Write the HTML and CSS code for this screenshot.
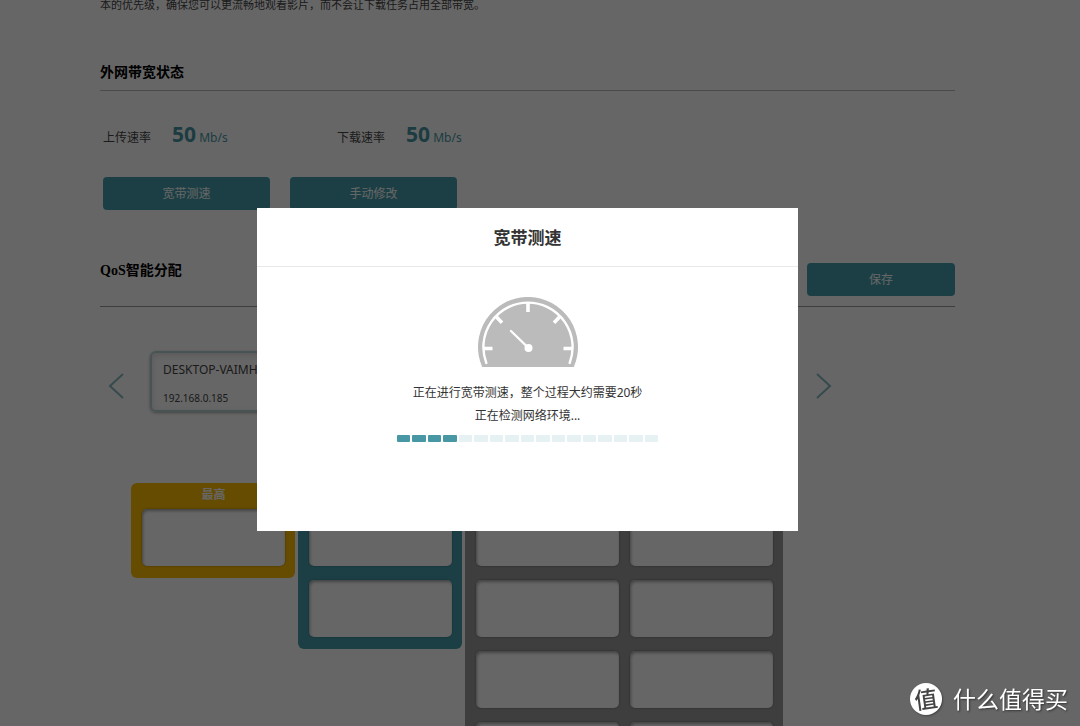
FILE: index.html
```html
<!DOCTYPE html>
<html lang="zh-CN">
<head>
<meta charset="utf-8">
<title>宽带测速</title>
<link rel="stylesheet" href="styles.css">
</head>
<body>
<main class="page">
  <p class="intro">本的优先级，确保您可以更流畅地观看影片，而不会让下载任务占用全部带宽。</p>

  <section class="section">
    <div class="section-head"><h2>外网带宽状态</h2></div>
    <dl class="rates">
      <div class="rate"><dt>上传速率</dt><dd><strong>50</strong> Mb/s</dd></div>
      <div class="rate"><dt>下载速率</dt><dd><strong>50</strong> Mb/s</dd></div>
    </dl>
    <div class="actions">
      <button class="btn" type="button">宽带测速</button>
      <button class="btn" type="button">手动修改</button>
    </div>
  </section>

  <section class="section qos">
    <div class="section-head">
      <h2>QoS智能分配</h2>
      <button class="btn btn-save" type="button">保存</button>
    </div>
    <div class="devices">
      <button class="arrow" type="button" aria-label="上一页"><svg viewBox="0 0 16 28" width="16" height="28"><path d="M15 2 2 14l13 12"/></svg></button>
      <div class="device">
        <span class="device-name">DESKTOP-VAIMH</span>
        <span class="device-ip">192.168.0.185</span>
      </div>
      <button class="arrow" type="button" aria-label="下一页"><svg viewBox="0 0 16 28" width="16" height="28"><path d="M1 2l13 12L1 26"/></svg></button>
    </div>
    <div class="levels">
      <div class="level level-top">
        <h3>最高</h3>
        <div class="slots"><div class="slot"></div></div>
      </div>
      <div class="level level-high">
        <h3></h3>
        <div class="slots"><div class="slot"></div><div class="slot"></div></div>
      </div>
      <div class="level level-normal">
        <h3></h3>
        <div class="slots">
          <div class="slot"></div><div class="slot"></div>
          <div class="slot"></div><div class="slot"></div>
          <div class="slot"></div><div class="slot"></div>
          <div class="slot"></div><div class="slot"></div>
        </div>
      </div>
    </div>
  </section>
</main>

<div class="overlay">
  <div class="dialog" role="dialog" aria-modal="true" aria-labelledby="dialog-title">
    <h1 class="dialog-title" id="dialog-title">宽带测速</h1>
    <div class="dialog-body">
      <svg class="gauge" viewBox="0 0 100 70" width="100" height="70" aria-hidden="true">
        <path fill="#bbb" d="M4.200 70A50 50 0 1 1 95.800 70Z"/>
        <g fill="none" stroke="#fff" stroke-linecap="round">
          <path stroke-width="2.4" d="M8.300 66A44.600 44.600 0 1 1 91.700 66"/>
          <path stroke-width="3.600" stroke-linecap="butt" d="M50 6v9M6 51.500h8.500M94 51.500h-8.500M18 19.500l6 6.200M82 19.500l-6 6.200"/>
          <path stroke-width="2.400" d="M33 34l17.500 17"/>
        </g>
        <circle cx="50.500" cy="51" r="4" fill="#fff"/>
      </svg>
      <p>正在进行宽带测速，整个过程大约需要20秒</p>
      <p>正在检测网络环境...</p>
      <div class="progress" role="progressbar" aria-label="测速进度" aria-valuemin="0" aria-valuemax="17" aria-valuenow="4">
        <i class="on"></i><i class="on"></i><i class="on"></i><i class="on"></i><i></i><i></i><i></i><i></i><i></i><i></i><i></i><i></i><i></i><i></i><i></i><i></i><i></i>
      </div>
    </div>
  </div>
</div>

<div class="watermark"><span class="watermark-logo"><span>值</span></span><span>什么值得买</span></div>
</body>
</html>
```
FILE: styles.css
```css
* { box-sizing: border-box; }

body {
  margin: 0;
  height: 100vh;
  overflow: hidden;
  padding-right: 25px;
  background: #fff;
  color: #444;
  font: 12px/20px "Noto Sans", "Noto Sans CJK SC", sans-serif;
}

h1, h2, h3, p, dl, dd { margin: 0; }
button { font: inherit; border: 0; padding: 0; }

.page { max-width: 855px; margin: 0 auto; }
.intro { font-size: 11px; line-height: 10px; }

.section { margin-top: 53px; }
.section-head {
  display: flex;
  justify-content: space-between;
  padding-bottom: 7px;
  border-bottom: 1px solid #bbb;
}
.section-head h2 {
  color: #000;
  font: bold 14px/20px "Liberation Serif", "Noto Sans CJK SC", serif;
}

.rates { display: flex; padding: 30px 3px 0; }
.rate { display: flex; align-items: baseline; width: 234px; line-height: 26px; }
.rate dt { width: 69px; }
.rate dd { color: #4797a5; }
.rate strong { font-size: 21px; }

.actions { display: flex; gap: 20px; padding: 26px 3px 0; }
.btn {
  width: 167px;
  height: 33px;
  border-radius: 4px;
  background: #459fad;
  color: #fff;
}
.btn-save { width: 148px; }

.qos { margin-top: 53px; }
.qos .section-head { padding-bottom: 10px; border-color: #999; }
.qos h2 { line-height: 16px; }

.devices { display: flex; align-items: center; padding: 44px 123px 0 8px; }
.arrow { display: flex; margin-top: 9px; background: none; }
.arrow svg { fill: none; stroke: #86b8c0; stroke-width: 2; }
.device {
  display: flex;
  flex-direction: column;
  width: 165px;
  margin: 0 auto 0 26px;
  padding: 6px 11px 3px;
  border: 2px solid #b4cfd3;
  border-radius: 6px;
  box-shadow: 0 1px 3px #aaa, inset 0 2px 6px #ddd;
}
.device-name { line-height: 22px; }
.device-ip { padding-top: 8px; font-size: 10px; line-height: 18px; }

.levels { display: flex; align-items: flex-start; gap: 3px; padding: 71px 0 0 31px; }
.level { padding: 0 10px 12px 11px; border-radius: 6px; }
.level h3 { height: 26px; color: #fff; font-size: 12px; line-height: 24px; text-align: center; }
.level-top { background: #ffbe00; }
.level-high { background: #459fad; }
.level-normal { background: #9b9b9b; }
.slots { display: grid; grid-template-columns: 143px; gap: 14px 11px; }
.level-normal .slots { grid-template-columns: 143px 143px; }
.slot {
  height: 57px;
  border-radius: 5px;
  background: #fff;
  box-shadow: inset 1px 2px 3px #aaa, 0 0 2px rgba(0, 0, 0, .4);
}

.overlay {
  position: fixed;
  inset: 0;
  display: flex;
  align-items: center;
  justify-content: center;
  padding: 12px 25px 0 0;
  background: rgba(0, 0, 0, .6);
}
.dialog { width: 541px; max-width: 100%; padding-bottom: 89px; background: #fff; color: #333; }
.dialog-title {
  padding: 18px 0 16px;
  border-bottom: 1px solid #e8e8e8;
  font-size: 17px;
  line-height: 24px;
  text-align: center;
}
.dialog-body {
  display: flex;
  flex-direction: column;
  align-items: center;
  padding-top: 30px;
  line-height: 23px;
}
.gauge { margin-bottom: 14px; }
.progress {
  display: grid;
  grid-template-columns: repeat(17, 1fr);
  gap: 2px;
  width: 261px;
  margin-top: 8px;
}
.progress i { height: 7px; border-radius: 1px; background: #e5f1f3; }
.progress .on { background: #4797a5; }

.watermark {
  position: fixed;
  right: 12px;
  bottom: 11px;
  display: flex;
  align-items: center;
  gap: 11px;
  color: #fff;
  font-size: 23px;
  line-height: 32px;
  text-shadow: 1px 1px 2px #333;
}
.watermark-logo {
  width: 32px;
  height: 32px;
  border-radius: 50%;
  background: #fff;
  color: #444;
  text-align: center;
  text-shadow: none;
  box-shadow: 1px 1px 2px #444;
}
.watermark-logo span { display: block; font-weight: 500; transform: rotate(-8deg); }
```
